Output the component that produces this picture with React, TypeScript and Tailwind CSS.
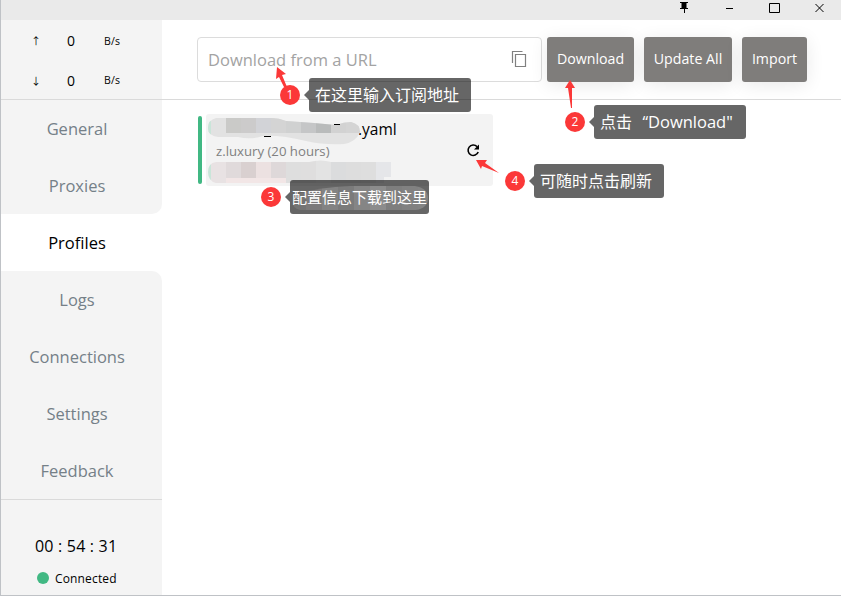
import React from "react";

const font = "font-['Open_Sans','Noto_Sans_CJK_SC',sans-serif]";

function Speed({ arrow }: { arrow: string }) {
  return (
    <div className="flex h-10 items-center pt-[2px] text-black">
      <span className="ml-[30px] w-[10px] text-center font-['Noto_Sans_CJK_SC'] text-[10px]">{arrow}</span>
      <span className="ml-[22px] w-[16px] text-center text-[14px]">0</span>
      <span className="ml-[25px] pt-[2px] text-[10.5px] tracking-[0.2px]">B/s</span>
    </div>
  );
}

const nav = ["General", "Proxies", "Profiles", "Logs", "Connections", "Settings", "Feedback"];

function NavItem({ label }: { label: string }) {
  const active = label === "Profiles";
  const corner = label === "Proxies" ? "rounded-br-[10px]" : label === "Logs" ? "rounded-tr-[10px]" : "";
  return (
    <div
      className={`flex h-[57px] items-center justify-center pt-[2px] pr-[9px] text-[16.5px] ${corner} ${
        active ? "bg-white text-black" : "bg-[#f4f4f4] text-[#758088]"
      }`}
    >
      {label}
    </div>
  );
}

function ActionButton({ label, size }: { label: string; size: string }) {
  return (
    <button className={`flex h-[45px] items-center justify-center rounded-[3px] bg-[#7f7d7b] pb-[2px] text-[14.2px] whitespace-nowrap text-white shadow-[0_3px_18px_rgba(0,0,0,0.09)] ${size}`}>
      {label}
    </button>
  );
}

function Badge({ n, at }: { n: number; at: string }) {
  return (
    <div className={`absolute flex size-5 items-center justify-center rounded-full bg-[#fb3838] text-[12px] leading-none text-white ${at}`}>
      {n}
    </div>
  );
}

function Note({ children, at }: { children: React.ReactNode; at: string }) {
  return (
    <div className={`absolute flex h-[34px] items-center rounded-[3px] bg-black/60 whitespace-nowrap text-white ${at}`}>
      <svg className="absolute top-[12px] -left-[5px]" width="5" height="10">
        <path d="M5 0 0 5 5 10Z" fill="black" fillOpacity="0.6" />
      </svg>
      {children}
    </div>
  );
}

function Redaction() {
  const top = ["#cacac8", "#cccbcb", "#d2d3d7", "#d4d4d4", "#d0d1d1", "#c5c6c7", "#b9bbbb", "#d2d2d2", "#d4d4d4"];
  const bottom = ["#e8e2e3", "#e0dadb", "#d9d0d0", "#ece1e1", "#ded8d9", "#dedede", "#dfdede", "#e3e3e3", "#dbdcdd", "#dddddd", "#dedede", "#e5e6e9"];
  return (
    <svg className="absolute top-0 left-0" width="288" height="104">
      <defs>
        <clipPath id="nameMask">
          <path d="M10 4H66Q73 4 80 7L108 9L130 11Q138 8 145 8Q154 10 154 18Q150 28 138 30Q118 31 100 27Q75 21 57 22Q45 26 32 23H12Q2 22 2 14T10 4Z" />
        </clipPath>
        <clipPath id="sizeMask">
          <path d="M10 48H103Q115 45 125 48H185V63H178V69H10Q2 67 2 58T10 48Z" />
        </clipPath>
        <clipPath id="lowerMask">
          <path d="M84 66H176V69H84ZM98 78Q140 72 180 72H212Q221 76 221 86T210 96H95Q86 94 87 88Z" />
        </clipPath>
      </defs>
      <rect x="58" y="22" width="7" height="1" fill="black" />
      <g clipPath="url(#nameMask)" shapeRendering="crispEdges">
        <rect width="160" height="36" fill="#e2e2e2" />
        {top.map((c, i) => (
          <rect key={i} x={20 + i * 15} y="0" width="15" height="19" fill={c} />
        ))}
        <rect x="0" y="0" width="5" height="36" fill="#c9e5d9" />
      </g>
      <rect x="128" y="10" width="6" height="1" fill="black" />
      <g clipPath="url(#sizeMask)" shapeRendering="crispEdges">
        {bottom.map((c, i) => (
          <rect key={i} x={5 + i * 15} y="45" width="15" height="27" fill={c} />
        ))}
        <rect x="20" y="64" width="60" height="8" fill="#f2e6e6" />
        <rect x="0" y="45" width="5" height="30" fill="#c9e5d9" />
      </g>
    </svg>
  );
}

function LowerRedaction() {
  const cells = ["#747474", "#7c7a7a", "#838383", "#7b7b7b", "#858585", "#8c8c8c", "#7e7e7e", "#818181", "#838383"];
  return (
    <svg className="absolute top-0 left-0" width="139" height="34">
      <defs>
        <clipPath id="pill">
          <path d="M8 14Q30 7 60 6H125Q138 8 138 18T126 30H10Q2 28 3 22Z" />
        </clipPath>
      </defs>
      <g clipPath="url(#pill)">
        {cells.map((c, i) => (
          <rect key={i} x={i * 16} width="16" height="34" fill={c} />
        ))}
      </g>
    </svg>
  );
}

export default function App() {
  return (
    <div className={`relative flex h-[596px] w-[841px] flex-col overflow-hidden border-b border-l border-[#bfc2c6] bg-white ${font}`}>
      <div className="flex h-5 shrink-0 items-start justify-end bg-[#eaeaea] text-black">
        <svg width="171" height="20" fill="none" stroke="black">
          <path d="M10 2.5H18M10 8.5H18" strokeWidth="1" />
          <path d="M11.5 2H16.5V8H11.5Z" fill="black" stroke="none" />
          <path d="M14.5 8V13" />
          <path d="M56 8.5H63" />
          <path d="M99.5 3.5H109.5V12.5H99.5Z" />
          <path d="m145.500 4 8 8m0-8-8 8" />
        </svg>
      </div>
      <div className="flex h-20 shrink-0 border-b border-[#dadada]">
        <div className="flex w-[161px] flex-col bg-[#f4f4f4]">
          <Speed arrow="↑" />
          <Speed arrow="↓" />
        </div>
        <div className="flex pt-[17px] pl-[35px]">
          <div className="flex h-[45px] w-[345px] items-center justify-between rounded-[4px] border border-[#dcdcdc] pr-[14px] pl-[10px]">
            <span className="pt-[2px] text-[16.5px] text-[#a3a3a3]">Download from a URL</span>
            <svg className="-mt-[2px]" width="16" height="18" fill="none" stroke="#808080">
              <path d="M1.500 13V1.500H11.500M4.500 4.500H14.500V16.500H4.500Z" strokeWidth="1.200" />
            </svg>
          </div>
          <div className="ml-[5px] flex gap-[10px]">
            <ActionButton label="Download" size="w-[87px]" />
            <ActionButton label="Update All" size="w-[88px]" />
            <ActionButton label="Import" size="w-[65px]" />
          </div>
        </div>
      </div>
      <div className="flex h-[495px]">
        <div className="flex w-[161px] shrink-0 flex-col">
          {nav.map((label) => (
            <NavItem key={label} label={label} />
          ))}
          <div className="flex flex-1 flex-col border-t border-[#dadada] bg-[#f4f4f4] text-black">
            <div className="mt-[34px] ml-[34px] text-[16px] leading-6 tracking-[0.2px] whitespace-nowrap">00 : 54 : 31</div>
            <div className="mt-[10px] ml-[36px] flex h-5 items-center gap-[6px] text-[12px] tracking-[0.15px]">
              <span className="size-3 rounded-full bg-[#41b883]" />
              <span className="pt-[2px]">Connected</span>
            </div>
          </div>
        </div>
        <div className="flex pt-[14px] pl-[36px]">
          <div className="mt-[2px] h-[68px] w-1 rounded-[2px] bg-[#41b883]" />
          <div className="relative ml-1 h-[72px] w-[287px] rounded-[3px] bg-[#f3f3f3]">
            <div className="mt-[3px] ml-[152px] text-[15.5px] leading-6 text-black">.yaml</div>
            <div className="ml-[10px] text-[13.2px] leading-5 text-[#808080]">z.luxury (20 hours)</div>
            <Redaction />
            <svg className="absolute top-[29px] left-[260px]" width="15" height="15" fill="none" stroke="black" strokeWidth="1.600">
              <path d="M12.200 9A5.200 5.200 0 1 1 11 3.600" />
              <path d="M13 1.500V6.500H8Z" fill="black" stroke="none" />
            </svg>
          </div>
        </div>
      </div>

      <svg className="absolute top-0 -left-px" width="841" height="596" fill="#fb3838">
        <path d="M277 67 286 74 282 75 287 87 284 87 279 77 276 79Z" />
        <path d="M570 80 575 88 572 88 572 108 571 108 568 88 565 88Z" />
        <path d="M476 160 487 160 485 163 499 173 482 166 481 169Z" />
      </svg>
      <Badge n={1} at="top-[85px] left-[279px]" />
      <Badge n={2} at="top-[112px] left-[564px]" />
      <Badge n={3} at="top-[187px] left-[260px]" />
      <Badge n={4} at="top-[171px] left-[504px]" />
      <Note at="top-[78px] left-[308px] w-[162px] pl-[6px] text-[16px]">在这里输入订阅地址</Note>
      <Note at="top-[105px] left-[593px] w-[152px] pl-[6px] text-[16px]">
        <span>点击</span>
        <span className="w-[16px] text-right">“</span>
        <span className="text-[16.5px]">Download"</span>
      </Note>
      <Note at="top-[180px] left-[289px] w-[139px] pl-[2px] text-[15px]">
        <LowerRedaction />
        <span className="relative">配置信息下载到这里</span>
      </Note>
      <Note at="top-[164px] left-[533px] w-[130px] pl-[6px] text-[16px]">可随时点击刷新</Note>
    </div>
  );
}
